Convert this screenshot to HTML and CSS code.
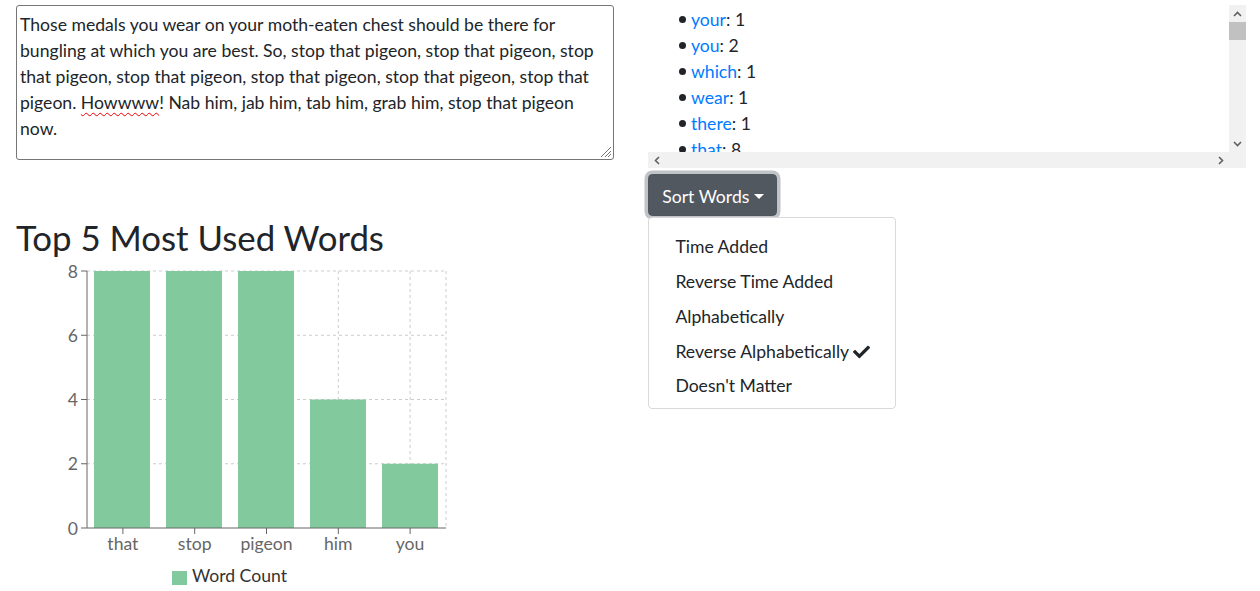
FILE: index.html
```html
<!DOCTYPE html>
<html lang="en">
<head>
<meta charset="utf-8">
<title>Word Counter</title>
<link rel="stylesheet" href="styles.css">
</head>
<body>
<div class="page">
  <section class="col col-left">
    <div class="textbox">
      <p class="textbox-text">Those medals you wear on your moth-eaten chest should be there for bungling at which you are best. So, stop that pigeon, stop that pigeon, stop that pigeon, stop that pigeon, stop that pigeon, stop that pigeon, stop that pigeon. <span class="misspelt">Howwww</span>! Nab him, jab him, tab him, grab him, stop that pigeon now.</p>
      <svg class="grip" width="14" height="14" viewBox="0 0 14 14"><path d="M13 3 L3 13 M13 7 L7 13 M13 10 L10 13" stroke="#777" stroke-width="1" fill="none"/></svg>
    </div>
    <h2 class="heading">Top 5 Most Used Words</h2>
    <svg class="chart" width="460" height="330" viewBox="0 0 460 330">
      <g class="grid" stroke="#ccc" stroke-dasharray="3 3" fill="none">
        <line x1="71" y1="10" x2="430" y2="10"/>
        <line x1="71" y1="74.25" x2="430" y2="74.25"/>
        <line x1="71" y1="138.5" x2="430" y2="138.5"/>
        <line x1="71" y1="202.75" x2="430" y2="202.75"/>
        <line x1="106.9" y1="10" x2="106.9" y2="267"/>
        <line x1="178.7" y1="10" x2="178.7" y2="267"/>
        <line x1="250.5" y1="10" x2="250.5" y2="267"/>
        <line x1="322.3" y1="10" x2="322.3" y2="267"/>
        <line x1="394.1" y1="10" x2="394.1" y2="267"/>
        <line x1="430" y1="10" x2="430" y2="267"/>
      </g>
      <g class="bars" fill="#82ca9d">
        <rect x="78" y="10" width="56" height="257"/>
        <rect x="150" y="10" width="56" height="257"/>
        <rect x="222" y="10" width="56" height="257"/>
        <rect x="294" y="138.5" width="56" height="128.5"/>
        <rect x="366" y="202.75" width="56" height="64.25"/>
      </g>
      <g class="axis" stroke="#666" fill="none">
        <line x1="71" y1="10" x2="71" y2="267"/>
        <line x1="71" y1="267" x2="430" y2="267"/>
        <line x1="65" y1="10" x2="71" y2="10"/>
        <line x1="65" y1="74.25" x2="71" y2="74.25"/>
        <line x1="65" y1="138.5" x2="71" y2="138.5"/>
        <line x1="65" y1="202.75" x2="71" y2="202.75"/>
        <line x1="65" y1="267" x2="71" y2="267"/>
        <line x1="106.9" y1="267" x2="106.9" y2="273"/>
        <line x1="178.7" y1="267" x2="178.7" y2="273"/>
        <line x1="250.5" y1="267" x2="250.5" y2="273"/>
        <line x1="322.3" y1="267" x2="322.3" y2="273"/>
        <line x1="394.1" y1="267" x2="394.1" y2="273"/>
      </g>
      <g class="ytick" text-anchor="end">
        <text x="62" y="16.5">8</text>
        <text x="62" y="80.75">6</text>
        <text x="62" y="145">4</text>
        <text x="62" y="209.25">2</text>
        <text x="62" y="273.5">0</text>
      </g>
      <g class="xtick" text-anchor="middle">
        <text x="106.9" y="289">that</text>
        <text x="178.7" y="289">stop</text>
        <text x="250.5" y="289">pigeon</text>
        <text x="322.3" y="289">him</text>
        <text x="394.1" y="289">you</text>
      </g>
      <g class="legend">
        <rect x="156" y="310" width="15" height="14" fill="#82ca9d"/>
        <text x="176" y="321">Word Count</text>
      </g>
    </svg>
  </section>

  <section class="col col-right">
    <div class="listbox">
      <div class="listbox-view">
        <ul class="word-list">
          <li><a href="#">your</a>: 1</li>
          <li><a href="#">you</a>: 2</li>
          <li><a href="#">which</a>: 1</li>
          <li><a href="#">wear</a>: 1</li>
          <li><a href="#">there</a>: 1</li>
          <li><a href="#">that</a>: 8</li>
          <li><a href="#">tab</a>: 1</li>
          <li><a href="#">stop</a>: 8</li>
          <li><a href="#">so</a>: 1</li>
        </ul>
      </div>
      <div class="vscroll">
        <span class="sb-btn"><svg width="9" height="6" viewBox="0 0 9 6"><path d="M1 5 L4.5 1.5 L8 5" stroke="#606060" stroke-width="1.6" fill="none"/></svg></span>
        <span class="sb-thumb"></span>
        <span class="sb-fill"></span>
        <span class="sb-btn"><svg width="9" height="6" viewBox="0 0 9 6"><path d="M1 1 L4.5 4.5 L8 1" stroke="#606060" stroke-width="1.6" fill="none"/></svg></span>
      </div>
      <div class="hscroll">
        <span class="sb-btn"><svg width="6" height="9" viewBox="0 0 6 9"><path d="M5 1 L1.5 4.5 L5 8" stroke="#606060" stroke-width="1.6" fill="none"/></svg></span>
        <span class="sb-fill"></span>
        <span class="sb-btn"><svg width="6" height="9" viewBox="0 0 6 9"><path d="M1 1 L4.5 4.5 L1 8" stroke="#606060" stroke-width="1.6" fill="none"/></svg></span>
      </div>
      <div class="sb-corner"></div>
    </div>

    <div class="dropdown">
      <button class="btn-sort" type="button">Sort Words<span class="caret"></span></button>
      <div class="dropdown-menu">
        <a class="dropdown-item" href="#">Time Added</a>
        <a class="dropdown-item" href="#">Reverse Time Added</a>
        <a class="dropdown-item" href="#">Alphabetically</a>
        <a class="dropdown-item" href="#">Reverse Alphabetically<svg class="check" width="17" height="14" viewBox="0 60 512 392"><path d="M173.898 439.404l-166.4-166.4c-9.997-9.997-9.997-26.206 0-36.204l36.203-36.204c9.997-9.998 26.207-9.998 36.204 0L192 312.69 432.095 72.596c9.997-9.997 26.207-9.997 36.204 0l36.203 36.204c9.997 9.997 9.997 26.206 0 36.204l-294.4 294.401c-9.998 9.997-26.207 9.997-36.204-.001z" fill="#212529"/></svg></a>
        <a class="dropdown-item" href="#">Doesn't Matter</a>
      </div>
    </div>
  </section>
</div>
</body>
</html>
```

FILE: styles.css
```css
* { box-sizing: border-box; }

html, body {
  margin: 0;
  background: #fff;
}

body {
  font-family: "Lato", "Liberation Sans", sans-serif;
  font-size: 17.6px;
  line-height: 26.4px;
  color: #212529;
}

.page {
  display: grid;
  grid-template-columns: 598px 598px;
  column-gap: 34px;
  padding: 5px 0 0 16px;
}

.col { min-width: 0; }

/* text area */
.textbox {
  position: relative;
  height: 155px;
  border: 1px solid #767676;
  border-radius: 3px;
  padding: 5.5px 3px 2px;
}
.textbox-text {
  margin: 0;
  line-height: 26.1px;
}
.misspelt {
  text-decoration: underline wavy #e00;
  text-decoration-thickness: 1px;
  text-underline-offset: 3px;
}
.grip {
  position: absolute;
  right: 1px;
  bottom: 1px;
}

.heading {
  margin: 57px 0 0;
  font-size: 34.8px;
  line-height: 42.2px;
  font-weight: 400;
  color: #212529;
}

.chart {
  display: block;
  margin-top: 2px;
  overflow: visible;
}
.chart text {
  font-family: "Lato", "Liberation Sans", sans-serif;
  font-size: 17.6px;
}
.ytick, .xtick { fill: #666; }
.legend text { fill: #333; }

/* word list box */
.listbox {
  display: grid;
  grid-template-columns: 1fr 17px;
  grid-template-rows: 147px 16px;
  height: 163px;
}
.listbox-view { overflow: hidden; }
.word-list {
  margin: 0;
  padding: 1.5px 0 0 31px;
  list-style: none;
}
.word-list li {
  line-height: 26px;
}
.word-list li::before {
  content: "";
  display: inline-block;
  width: 7px;
  height: 7px;
  border-radius: 50%;
  background: #212529;
  margin-right: 5px;
  vertical-align: 2.5px;
}
.word-list a {
  color: #007bff;
  text-decoration: none;
}

.vscroll, .hscroll, .sb-corner { background: #f1f1f1; }
.vscroll {
  display: flex;
  flex-direction: column;
}
.hscroll { display: flex; }
.sb-btn {
  flex: 0 0 17px;
  height: 17px;
  display: flex;
  align-items: center;
  justify-content: center;
}
.hscroll .sb-btn { width: 17px; height: 16px; }
.sb-thumb {
  flex: 0 0 18px;
  background: #c1c1c1;
}
.sb-fill { flex: 1; }

/* dropdown */
.dropdown { margin-top: 6.4px; }
.btn-sort {
  display: inline-flex;
  align-items: center;
  font: inherit;
  color: #fff;
  background: #52585f;
  border: 1px solid #4e555b;
  border-radius: 4.4px;
  padding: 8.5px 12px 4.7px 13.2px;
  line-height: 26.4px;
  box-shadow: 0 0 0 3.5px rgba(130, 138, 145, 0.5);
}
.caret {
  display: inline-block;
  margin-left: 5px;
  margin-bottom: 2px;
  border-top: 5.3px solid #fff;
  border-left: 5.3px solid transparent;
  border-right: 5.3px solid transparent;
}

.dropdown-menu {
  position: relative;
  z-index: 1;
  width: max-content;
  margin-top: 1.2px;
  padding: 9.8px 0 6.4px;
  background: #fff;
  border: 1px solid rgba(0, 0, 0, 0.15);
  border-radius: 4.4px;
}
.dropdown-item {
  display: flex;
  align-items: center;
  padding: 6.4px 25px 2.4px 26.4px;
  color: #212529;
  text-decoration: none;
  line-height: 26px;
}
.check { margin-left: 4px; }
```
